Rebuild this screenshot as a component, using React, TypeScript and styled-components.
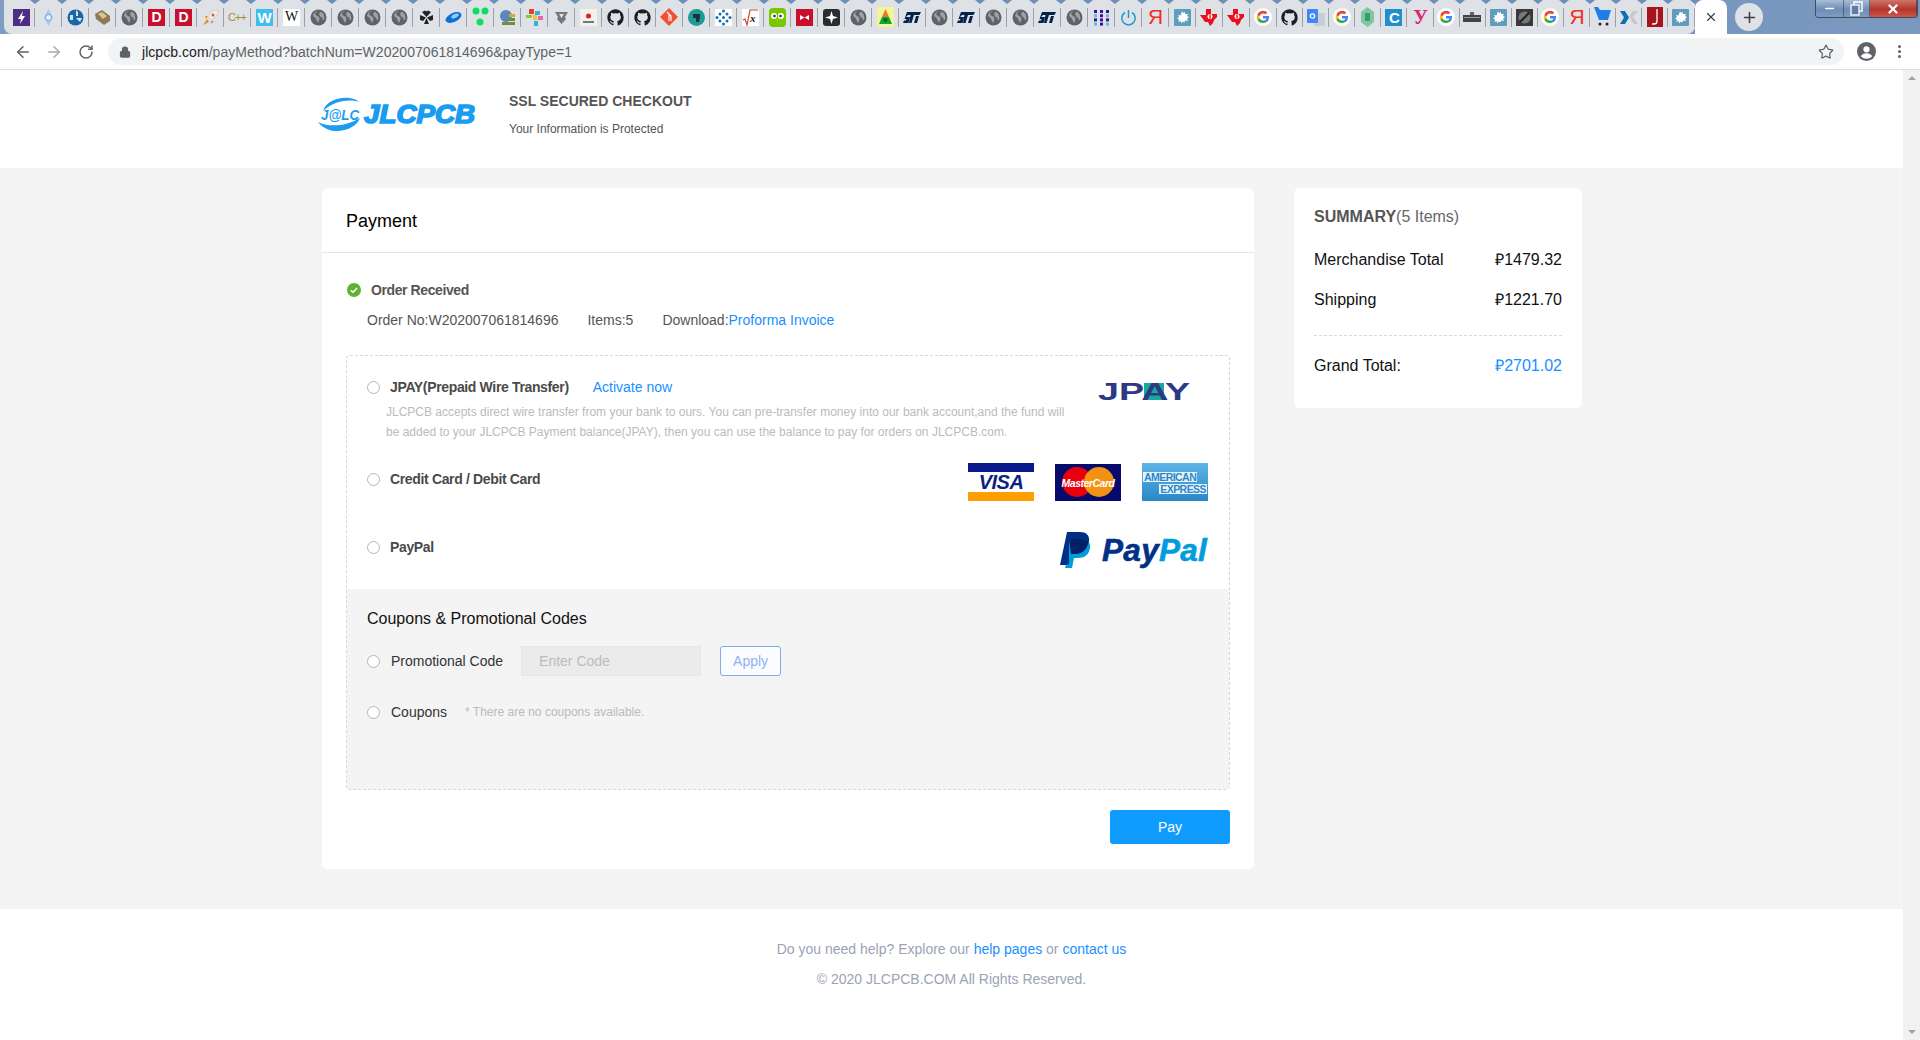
import React from "react";
import styled, { createGlobalStyle } from "styled-components";
import { ArrowLeft, ArrowRight, RotateCw, Lock, Star, X, Plus, Minus } from "lucide-react";

const GlobalStyle = createGlobalStyle`
  html, body { margin: 0; padding: 0; height: 100%; overflow: hidden; }
  body { font-family: "Liberation Sans", Arial, sans-serif; background: #fff; }
  * { box-sizing: border-box; }
`;

const FAVICONS = [
  "bolt", "pin", "bluegear", "stack", "globe", "d", "d", "rocket", "cpp", "wblue", "wiki",
  "globe", "globe", "globe", "globe", "clover", "disc", "dots", "tree", "mosaic", "shield", "stamp",
  "github", "github", "git", "teal", "diamond", "sqrt", "owl", "redbox", "star", "globe", "tri",
  "st", "globe", "st", "globe", "globe", "st", "globe", "grid", "power", "ya", "splash", "ti", "ti", "g",
  "github", "translate", "g", "hex", "c", "y", "g", "bank", "splash", "vault", "g", "ya", "cart", "x", "music", "splash",
];

function Favicon({ kind }: { kind: string }) {
  switch (kind) {
    case "bolt":
      return (
        <svg width="17" height="17" viewBox="0 0 17 17">
          <rect width="17" height="17" fill="#4b2e83" />
          <path d="M10 2 5 10h3l-1 5 5-8H9z" fill="#fff" />
        </svg>
      );
    case "pin":
      return (
        <svg width="17" height="17" viewBox="0 0 17 17">
          <path d="M8.5 0 13 8.5 8.5 17 4 8.5z" fill="#a9c8ef" />
          <circle cx="8.5" cy="8.5" r="3" fill="#eaf2fc" stroke="#6f9fdc" />
        </svg>
      );
    case "bluegear":
      return (
        <svg width="17" height="17" viewBox="0 0 17 17">
          <circle cx="8.5" cy="8.5" r="8" fill="#1668a8" />
          <path d="M9 1v6h2V3zM9 9h6l-2 4zM3 6h3v5H3z" fill="#dee1e6" />
        </svg>
      );
    case "stack":
      return (
        <svg width="17" height="17" viewBox="0 0 17 17">
          <path d="M1 5 8 1l8 6v5l-6 4-8-6z" fill="#8a7a58" />
          <path d="M4 5 8 3l5 4-4 3z" fill="#d8c690" />
        </svg>
      );
    case "globe":
      return (
        <svg width="17" height="17" viewBox="0 0 17 17">
          <circle cx="8.5" cy="8.5" r="8" fill="#5f6368" />
          <path d="M8 1.500 5 4l1 2.500 3 1.500 .5 2.500-1.500 3.500-1.500-3-1-2-2.500-2a7 7 0 0 1 5-5.500zM11 2.500l2.500 2.500 1 4.500-1.500 2-1-3-2-1-1-3z" fill="#b9bcc1" opacity=".7" />
        </svg>
      );
    case "d":
      return (
        <Square $bg="#c8102e" $fg="#fff" $size={14} $w={700}>D</Square>
      );
    case "rocket":
      return (
        <svg width="17" height="17" viewBox="0 0 17 17">
          <path d="M16 1c-5 0-8 3-10 7l3 3c4-2 7-5 7-10z" fill="#eee" stroke="#bbb" strokeWidth=".5" />
          <circle cx="11" cy="6" r="1.500" fill="#e05a3a" />
          <path d="M5 10 1 16l6-3zM3 7h3L4 10zM9 12v3l3-3z" fill="#e88a2a" />
        </svg>
      );
    case "cpp":
      return <Square $bg="transparent" $fg="#a88c2c" $size={11} $w={400}>C++</Square>;
    case "wblue":
      return <Square $bg="#3fbdee" $fg="#fff" $size={15} $w={700}>W</Square>;
    case "wiki":
      return <Square $bg="#fff" $fg="#111" $size={14} $w={400} $serif>W</Square>;
    case "clover":
      return (
        <svg width="17" height="17" viewBox="0 0 17 17">
          <path d="M8.500 8 4 3l3-1.500 1.500 1 1.500-1L13 3zM8 8.500 2 6 2 11l3 1zM9 8.500 15 6v5l-3 1zM8.500 9 6 15h5z" fill="#222" />
        </svg>
      );
    case "disc":
      return (
        <svg width="17" height="17" viewBox="0 0 17 17">
          <ellipse cx="8.500" cy="8.500" rx="8.500" ry="4.500" transform="rotate(-25 8.500 8.500)" fill="#0d6fd8" />
          <ellipse cx="10" cy="7" rx="4" ry="1.800" transform="rotate(-25 10 7)" fill="#8fd0ff" />
        </svg>
      );
    case "dots":
      return (
        <svg width="17" height="20" viewBox="0 0 17 20">
          <circle cx="4" cy="4" r="3.500" fill="#0be060" />
          <circle cx="13" cy="4" r="3.500" fill="#0be060" />
          <circle cx="8" cy="15" r="3.500" fill="#0be060" />
        </svg>
      );
    case "tree":
      return (
        <svg width="17" height="17" viewBox="0 0 17 17">
          <circle cx="7" cy="7" r="6" fill="#5a86b8" />
          <rect x="10" y="5" width="6" height="3" fill="#d6a92e" />
          <rect x="10" y="9" width="6" height="3" fill="#4f9a3c" />
          <rect x="3" y="13" width="13" height="3" fill="#7a8a3c" />
        </svg>
      );
    case "mosaic":
      return (
        <svg width="17" height="17" viewBox="0 0 17 17">
          <rect x="3" y="0" width="5" height="5" fill="#e8402a" />
          <rect x="9" y="2" width="5" height="4" fill="#35b0e0" />
          <rect x="0" y="6" width="6" height="3" fill="#8ac640" />
          <rect x="7" y="6" width="4" height="5" fill="#f2c230" />
          <rect x="12" y="7" width="5" height="4" fill="#e56aa0" />
          <rect x="8" y="12" width="4" height="5" fill="#35b0e0" />
        </svg>
      );
    case "shield":
      return (
        <svg width="17" height="17" viewBox="0 0 17 17">
          <path d="M2 3h13l-3 5 1 2-4.500 5L4 10l1-2z" fill="#777" />
          <path d="M6 5h5L8.500 9z" fill="#dee1e6" />
        </svg>
      );
    case "stamp":
      return (
        <svg width="17" height="17" viewBox="0 0 17 17">
          <rect width="17" height="17" fill="#f4f1ec" />
          <circle cx="8.500" cy="7" r="2.500" fill="#d9231f" />
          <rect x="3" y="12" width="11" height="2" fill="#777" />
        </svg>
      );
    case "github":
      return (
        <svg width="17" height="17" viewBox="0 0 24 24">
          <path
            fill="#1b1f23"
            d="M12 .5C5.650.5.500 5.650.500 12c0 5.100 3.300 9.400 7.900 10.900.6.100.8-.25.8-.55v-2c-3.200.7-3.900-1.400-3.900-1.400-.5-1.300-1.300-1.700-1.300-1.700-1-.7.100-.7.100-.7 1.200.1 1.800 1.200 1.800 1.200 1 1.800 2.700 1.300 3.400 1 .1-.8.400-1.300.7-1.600-2.600-.3-5.300-1.300-5.300-5.700 0-1.300.5-2.300 1.200-3.100-.1-.3-.5-1.500.1-3.100 0 0 1-.3 3.200 1.200a11 11 0 0 1 5.800 0c2.200-1.500 3.200-1.200 3.200-1.200.6 1.600.2 2.800.1 3.100.8.800 1.200 1.900 1.200 3.100 0 4.400-2.700 5.400-5.300 5.700.4.400.8 1.100.8 2.200v3.200c0 .3.200.7.800.6A11.500 11.500 0 0 0 23.500 12C23.500 5.650 18.350.5 12 .5z"
          />
        </svg>
      );
    case "git":
      return (
        <svg width="18" height="18" viewBox="0 0 18 18">
          <path d="M9 0 18 9l-9 9-9-9z" fill="#f05133" />
          <path d="M7 4l4 4v5M9 6v7" stroke="#fff" strokeWidth="1.200" fill="none" />
        </svg>
      );
    case "teal":
      return (
        <svg width="17" height="17" viewBox="0 0 17 17">
          <circle cx="8.500" cy="8.500" r="8.500" fill="#1f9a96" />
          <path d="M5 5h7v3l-1 5H8V9H5z" fill="#17323a" />
        </svg>
      );
    case "diamond":
      return (
        <svg width="17" height="17" viewBox="0 0 17 17">
          <rect width="17" height="17" fill="#fff" />
          {[[8.500, 2], [5, 5], [12, 5], [2, 8.500], [8.500, 8.500], [15, 8.500], [5, 12], [12, 12], [8.500, 15]].map(([x, y], i) => (
            <circle key={i} cx={x} cy={y} r="1.500" fill="#1670b8" />
          ))}
        </svg>
      );
    case "sqrt":
      return (
        <svg width="17" height="17" viewBox="0 0 17 17">
          <rect width="17" height="17" fill="#fff" />
          <path d="M1 11l2-1 2 6 3-15h8" stroke="#c8453a" strokeWidth="1.200" fill="none" />
          <SqrtX x="8" y="13">x</SqrtX>
        </svg>
      );
    case "owl":
      return (
        <svg width="17" height="19" viewBox="0 0 17 19">
          <rect width="17" height="19" rx="4" fill="#78c800" />
          <circle cx="5" cy="8" r="3" fill="#fff" />
          <circle cx="12" cy="8" r="3" fill="#fff" />
          <circle cx="5.500" cy="8" r="1.300" fill="#234" />
          <circle cx="11.500" cy="8" r="1.300" fill="#234" />
          <path d="M7 11h3l-1.500 2z" fill="#f5a800" />
        </svg>
      );
    case "redbox":
      return (
        <svg width="17" height="17" viewBox="0 0 17 17">
          <rect width="17" height="17" fill="#c8102e" />
          <path d="M4 6l4.500 2.500L13 6v5L8.500 8.500 4 11z" fill="#fff" />
        </svg>
      );
    case "star":
      return (
        <svg width="17" height="17" viewBox="0 0 17 17">
          <rect width="17" height="17" rx="3" fill="#2a2c30" />
          <path d="M8.500 2 10 7l5 1.500-5 1.500-1.500 5L7 10 2 8.500 7 7z" fill="#fff" />
        </svg>
      );
    case "tri":
      return (
        <svg width="17" height="20" viewBox="0 0 17 20">
          <rect width="17" height="20" fill="#f6f29a" />
          <path d="M8.500 2 12 10H5z" fill="#e87a1e" />
          <path d="M5 10h7l3 7H2z" fill="#0fa82e" />
          <circle cx="8.500" cy="13" r="2" fill="#063" />
        </svg>
      );
    case "st":
      return (
        <svg width="18" height="11" viewBox="0 0 18 11">
          <path d="M4 0h14l-1.500 3H11L8.500 11H6l1.500-8H5L3 5h4l-1.500 6H0l1-2.500h2L3.500 7H1.500z" fill="#03234b" />
          <path d="M13 4h3l-2 7h-3z" fill="#03234b" />
        </svg>
      );
    case "grid":
      return (
        <svg width="17" height="17" viewBox="0 0 17 17">
          {[0, 1, 2, 3].flatMap((r) =>
            [0, 1, 2].map((c) => (
              <rect key={`${r}-${c}`} x={1 + c * 6} y={1 + r * 4.200} width="3" height="3" fill={c === 1 ? "#41109a" : r % 2 ? "#4fc3e0" : "#41109a"} />
            ))
          )}
        </svg>
      );
    case "power":
      return (
        <svg width="17" height="17" viewBox="0 0 17 17" fill="none" stroke="#1d9ad6" strokeWidth="1.500">
          <path d="M8.500 1v8" />
          <path d="M5 3.500a6.700 6.700 0 1 0 7 0" />
        </svg>
      );
    case "ya":
      return <Square $bg="transparent" $fg="#f0301e" $size={21} $w={400}>Я</Square>;
    case "splash":
      return (
        <svg width="17" height="17" viewBox="0 0 17 17">
          <rect width="17" height="17" rx="1" fill="#5f9dbd" />
          <path d="M8 2l1 2 2-1v2l3 0-1 2 2 1-2 2 1 2-3-.500-.500 2-2-1-1 2-1-2.500-2 1 .500-2.500-2-1 2-1.500-1-2 2.500.500z" fill="#fff" />
        </svg>
      );
    case "ti":
      return (
        <svg width="18" height="17" viewBox="0 0 18 17">
          <path d="M6 0h5v5h6v3l-3 3-1 3-3 3-2-4H5L0 6h6z" fill="#e8101c" />
          <circle cx="10" cy="7.500" r="2.500" fill="#fff" />
          <rect x="9.300" y="5.500" width="1.400" height="4" fill="#e8101c" />
        </svg>
      );
    case "g":
      return (
        <svg width="18" height="18" viewBox="0 0 18 18">
          <circle cx="9" cy="9" r="9" fill="#fff" />
          <path d="M15 9.200c0-.4 0-.8-.1-1.200H9v2.400h3.400a3 3 0 0 1-1.300 1.900v1.500h2.100c1.100-1.100 1.800-2.700 1.800-4.600z" fill="#4285f4" />
          <path d="M9 15c1.700 0 3.100-.6 4.200-1.500l-2.100-1.600c-.6.400-1.300.7-2.100.7-1.600 0-3-1.100-3.500-2.500H3.400v1.600A6 6 0 0 0 9 15z" fill="#34a853" />
          <path d="M5.500 10.600a3.600 3.600 0 0 1 0-2.300V6.700H3.400a6 6 0 0 0 0 5.500z" fill="#fbbc05" />
          <path d="M9 5.400c.9 0 1.700.3 2.400.9l1.800-1.800A6 6 0 0 0 3.400 6.700l2.100 1.600C6 6.500 7.400 5.400 9 5.400z" fill="#ea4335" />
        </svg>
      );
    case "translate":
      return (
        <svg width="18" height="17" viewBox="0 0 18 17">
          <rect x="7" y="4" width="11" height="13" fill="#c9ccd1" />
          <rect width="11" height="14" rx="1" fill="#4285f4" />
          <circle cx="5.500" cy="7" r="2.200" fill="none" stroke="#fff" strokeWidth="1.200" />
        </svg>
      );
    case "hex":
      return (
        <svg width="15" height="20" viewBox="0 0 15 20">
          <path d="M7.500 0 14 5v10l-6.500 5L1 15V5z" fill="#7dc8a0" />
          <rect x="5" y="6" width="5" height="8" fill="#3c9a6c" />
        </svg>
      );
    case "c":
      return <Square $bg="#1f8fcf" $fg="#fff" $size={15} $w={700}>C</Square>;
    case "y":
      return <Square $bg="transparent" $fg="#e0246a" $size={20} $w={700} $serif>У</Square>;
    case "bank":
      return (
        <svg width="18" height="10" viewBox="0 0 18 10">
          <rect y="3" width="18" height="7" fill="#444" />
          <rect x="7" width="4" height="3" fill="#666" />
          <rect x="1" y="5" width="16" height="1" fill="#999" />
        </svg>
      );
    case "vault":
      return (
        <svg width="17" height="17" viewBox="0 0 17 17">
          <rect width="17" height="17" fill="#3a3a3a" />
          <circle cx="8.500" cy="8.500" r="6" fill="#777" />
          <path d="M4 13 13 4" stroke="#222" strokeWidth="2" />
        </svg>
      );
    case "cart":
      return (
        <svg width="17" height="20" viewBox="0 0 17 20">
          <path d="M0 0h4l2 3h11l-3 10H5z" fill="#1e7ee8" />
          <circle cx="6" cy="17" r="1.500" fill="#222" />
          <circle cx="13" cy="17" r="1.500" fill="#222" />
        </svg>
      );
    case "x":
      return (
        <svg width="18" height="13" viewBox="0 0 18 13">
          <path d="M0 0h5l4 6.500L5 13H0l4-6.500z" fill="#0f6fb0" />
          <path d="M18 0h-5L9.500 5 11 8l7-8zM11 9l3 4h4l-5-7z" fill="#c4c7cc" />
        </svg>
      );
    case "music":
      return (
        <svg width="16" height="20" viewBox="0 0 16 20">
          <rect width="16" height="20" fill="#a8141c" />
          <path d="M10 2v12a3 3 0 0 1-3 3H5" stroke="#fff" strokeWidth="1.300" fill="none" />
        </svg>
      );
    default:
      return null;
  }
}

function JlcLogo() {
  return (
    <svg width="160" height="38" viewBox="0 0 160 38">
      <path d="M6 15C9 6 20 1 32 2c5 .4 8 2 10 4-8-3-24-2-36 9z" fill="#1a9cf0" />
      <path d="M43 22c-3 8-14 14-26 13C9 34 3 29 1 26c9 5 28 5 42-4z" fill="#1a9cf0" />
      <LogoBadge x="4" y="24" textLength="38" lengthAdjust="spacingAndGlyphs">J@LC</LogoBadge>
      <LogoWord x="47" y="27" textLength="111" lengthAdjust="spacingAndGlyphs">JLCPCB</LogoWord>
    </svg>
  );
}

function JpayLogo() {
  return (
    <svg width="92" height="27" viewBox="0 0 92 27">
      <rect x="46" y="4" width="20" height="17" fill="#17a8a0" />
      <JpayWord x="0" y="21" textLength="92" lengthAdjust="spacingAndGlyphs">JPAY</JpayWord>
    </svg>
  );
}

function PaypalLogo() {
  return (
    <PaypalWrap>
      <svg width="32" height="36" viewBox="0 0 32 36">
        <path d="M8 0h13c6 0 10 3 9 10-1 8-6 12-13 12h-5l-2 11H1z" fill="#002f86" />
        <path d="M10 7h13c5 0 9 3 8 9-1 7-6 10-12 10h-4l-2 10H6l1-3 3-1z" fill="#009cde" />
        <path d="M10 7h13c3 0 5 1 6.600 2.500C28.500 17 23.500 22 17 22h-5z" fill="#012169" />
      </svg>
      <PaypalText>Pay<PaypalLight>Pal</PaypalLight></PaypalText>
    </PaypalWrap>
  );
}

function RestoreIcon() {
  return (
    <svg width="13" height="15" viewBox="0 0 13 15" fill="none" stroke="#fff" strokeWidth="1.500">
      <rect x="4" y="1" width="8" height="9" />
      <rect x="1" y="4" width="8" height="10" fill="#5d7ea6" stroke="#e8eef6" />
    </svg>
  );
}

export default function App() {
  return (
    <>
      <GlobalStyle />
      <Screen>
        <TabStrip>
          <Tabs>
            {FAVICONS.map((kind, i) => (
              <Tab key={i} $w={i < 47 ? 27 : 26.1}>
                <Favicon kind={kind} />
              </Tab>
            ))}
          </Tabs>
          <ActiveTab>
            <X size={14} strokeWidth={2} />
          </ActiveTab>
          <NewTab>
            <Plus size={17} strokeWidth={2.2} />
          </NewTab>
          <WindowControls>
            <WinButton $w={28}>
              <Minus size={13} strokeWidth={3} color="#fff" />
            </WinButton>
            <WinButton $w={26}>
              <RestoreIcon />
            </WinButton>
            <WinButton $w={47} $close>
              <X size={14} strokeWidth={4} color="#fff" />
            </WinButton>
          </WindowControls>
        </TabStrip>

        <Toolbar>
          <NavIcon $left={14}>
            <ArrowLeft size={18} strokeWidth={2} color="#5f6368" />
          </NavIcon>
          <NavIcon $left={13}>
            <ArrowRight size={18} strokeWidth={2} color="#a8abaf" />
          </NavIcon>
          <NavIcon $left={15}>
            <RotateCw size={16} strokeWidth={2.2} color="#5f6368" />
          </NavIcon>
          <UrlBar>
            <Lock size={12} strokeWidth={2.5} color="#5f6368" fill="#5f6368" />
            <UrlText>
              <UrlHost>jlcpcb.com</UrlHost>/payMethod?batchNum=W202007061814696&amp;payType=1
            </UrlText>
            <UrlStar>
              <Star size={16} strokeWidth={1.8} color="#5f6368" />
            </UrlStar>
          </UrlBar>
          <Avatar>
            <svg width="19" height="19" viewBox="0 0 19 19">
              <circle cx="9.500" cy="9.500" r="9.500" fill="#5f6368" />
              <circle cx="9.500" cy="7.300" r="3.100" fill="#fff" />
              <path d="M3.800 14.200c1-2 3.200-3 5.700-3s4.700 1 5.700 3a7.500 7.500 0 0 1-11.400 0z" fill="#fff" />
            </svg>
          </Avatar>
          <MenuDots>
            <span />
            <span />
            <span />
          </MenuDots>
        </Toolbar>

        <Viewport>
          <Page>
            <TopHeader>
              <LogoBox>
                <JlcLogo />
              </LogoBox>
              <SecureBlock>
                <SecureTitle>SSL SECURED CHECKOUT</SecureTitle>
                <SecureSub>Your Information is Protected</SecureSub>
              </SecureBlock>
            </TopHeader>

            <Content>
              <PaymentCard>
                <CardHead>Payment</CardHead>
                <CardBody>
                  <StatusRow>
                    <svg width="14" height="14" viewBox="0 0 14 14">
                      <circle cx="7" cy="7" r="7" fill="#5bb531" />
                      <path d="M3.800 7.200 6 9.300l4.200-4.300" stroke="#fff" strokeWidth="1.500" fill="none" />
                    </svg>
                    <StatusText>Order Received</StatusText>
                  </StatusRow>
                  <OrderMeta>
                    <span>Order No:W202007061814696</span>
                    <span>Items:5</span>
                    <span>
                      Download:<BlueLink>Proforma Invoice</BlueLink>
                    </span>
                  </OrderMeta>

                  <MethodsBox>
                    <MethodRow $h={97}>
                      <MethodLeft $top={21}>
                        <MethodLine>
                          <Radio />
                          <MethodName>JPAY(Prepaid Wire Transfer)</MethodName>
                          <ActivateLink>Activate now</ActivateLink>
                        </MethodLine>
                        <MethodDesc>
                          JLCPCB accepts direct wire transfer from your bank to ours. You can pre-transfer money into our bank account,and the fund will
                          be added to your JLCPCB Payment balance(JPAY), then you can use the balance to pay for orders on JLCPCB.com.
                        </MethodDesc>
                      </MethodLeft>
                      <MethodLogos $top={23} $right={19}>
                        <JpayLogo />
                      </MethodLogos>
                    </MethodRow>

                    <MethodRow $h={68}>
                      <MethodLeft $top={16}>
                        <MethodLine>
                          <Radio />
                          <MethodName>Credit Card / Debit Card</MethodName>
                        </MethodLine>
                      </MethodLeft>
                      <MethodLogos $top={10} $right={1}>
                        <VisaCard>
                          <VisaWord>VISA</VisaWord>
                        </VisaCard>
                        <MasterCard>
                          <McCircle $c="#f40009" $side="left" />
                          <McCircle $c="#ff9a0e" $side="right" />
                          <McWord>MasterCard</McWord>
                        </MasterCard>
                        <AmexCard>
                          <AmexLine>AMERICAN</AmexLine>
                          <AmexLine $right>EXPRESS</AmexLine>
                        </AmexCard>
                      </MethodLogos>
                    </MethodRow>

                    <MethodRow $h={68}>
                      <MethodLeft $top={16}>
                        <MethodLine>
                          <Radio />
                          <MethodName>PayPal</MethodName>
                        </MethodLine>
                      </MethodLeft>
                      <MethodLogos $top={11} $right={0}>
                        <PaypalLogo />
                      </MethodLogos>
                    </MethodRow>

                    <PromoPanel>
                      <PromoTitle>Coupons &amp; Promotional Codes</PromoTitle>
                      <PromoRow>
                        <Radio />
                        <PromoLabel>Promotional Code</PromoLabel>
                        <CodeInput placeholder="Enter Code" disabled />
                        <ApplyButton>Apply</ApplyButton>
                      </PromoRow>
                      <CouponRow>
                        <Radio />
                        <PromoLabel>Coupons</PromoLabel>
                        <CouponNote>* There are no coupons available.</CouponNote>
                      </CouponRow>
                    </PromoPanel>
                  </MethodsBox>

                  <PayRow>
                    <PayButton>Pay</PayButton>
                  </PayRow>
                </CardBody>
              </PaymentCard>

              <SummaryCard>
                <SummaryTitle>
                  <strong>SUMMARY</strong>(5 Items)
                </SummaryTitle>
                <SummaryRow $mt={23}>
                  <span>Merchandise Total</span>
                  <span>₽1479.32</span>
                </SummaryRow>
                <SummaryRow $mt={20}>
                  <span>Shipping</span>
                  <span>₽1221.70</span>
                </SummaryRow>
                <SummaryDivider />
                <SummaryRow $mt={20}>
                  <span>Grand Total:</span>
                  <GrandValue>₽2701.02</GrandValue>
                </SummaryRow>
              </SummaryCard>
            </Content>

            <Footer>
              <FooterLine>
                Do you need help? Explore our <BlueLink>help pages</BlueLink> or <BlueLink>contact us</BlueLink>
              </FooterLine>
              <FooterLine>© 2020 JLCPCB.COM All Rights Reserved.</FooterLine>
            </Footer>
          </Page>
          <ScrollTrack>
            <ScrollArrow $up />
            <ScrollArrow />
          </ScrollTrack>
        </Viewport>
      </Screen>
    </>
  );
}

const Screen = styled.div`
  width: 1920px;
  height: 1040px;
  display: flex;
  flex-direction: column;
  overflow: hidden;
`;

const TabStrip = styled.div`
  height: 34px;
  display: flex;
  flex-shrink: 0;
  background: linear-gradient(90deg, #7f9cc2, #6f90ba 60%, #7b99bf);
`;
const Tabs = styled.div`
  width: 1691px;
  margin-left: 4px;
  padding-left: 4px;
  display: flex;
  flex-shrink: 0;
  background: #dee1e6;
  border-radius: 0 0 8px 8px;
`;
const Tab = styled.div<{ $w: number }>`
  position: relative;
  width: ${(p) => p.$w}px;
  flex-shrink: 0;
  display: flex;
  align-items: center;
  justify-content: center;
  padding-right: 1px;
  &::before {
    content: "";
    position: absolute;
    right: 0;
    top: 8px;
    height: 19px;
    width: 1px;
    background: #9aa0a6;
  }
  &::after {
    content: "";
    position: absolute;
    right: -5px;
    top: 0;
    border-left: 5.5px solid transparent;
    border-right: 5.5px solid transparent;
    border-top: 4px solid #6c8eb8;
  }
`;
const Square = styled.div<{ $bg: string; $fg: string; $size: number; $w: number; $serif?: boolean }>`
  width: 17px;
  height: 17px;
  display: flex;
  align-items: center;
  justify-content: center;
  background: ${(p) => p.$bg};
  color: ${(p) => p.$fg};
  font-size: ${(p) => p.$size}px;
  font-weight: ${(p) => p.$w};
  font-family: ${(p) => (p.$serif ? '"Liberation Serif", serif' : '"Liberation Sans", sans-serif')};
  white-space: nowrap;
  letter-spacing: -1px;
`;
const SqrtX = styled.text`
  font-family: "Liberation Serif", serif;
  font-size: 11px;
  font-style: italic;
  font-weight: 700;
  fill: #222;
`;
const ActiveTab = styled.div`
  width: 32px;
  flex-shrink: 0;
  background: #fff;
  border-radius: 8px 8px 0 0;
  display: flex;
  align-items: center;
  justify-content: center;
  color: #3c4043;
`;
const NewTab = styled.div`
  width: 28px;
  height: 28px;
  flex-shrink: 0;
  margin: 3px 0 0 8px;
  border-radius: 50%;
  background: #dee1e6;
  display: flex;
  align-items: center;
  justify-content: center;
  color: #3c4043;
`;
const WindowControls = styled.div`
  margin-left: 52px;
  width: 103px;
  height: 18px;
  flex-shrink: 0;
  display: flex;
  border: 1px solid #3f4e60;
  border-top: 0;
  border-radius: 0 0 4px 4px;
  overflow: hidden;
`;
const WinButton = styled.div<{ $w: number; $close?: boolean }>`
  width: ${(p) => p.$w}px;
  display: flex;
  align-items: center;
  justify-content: center;
  border-right: 1px solid rgba(40, 50, 70, 0.5);
  background: ${(p) =>
    p.$close
      ? "linear-gradient(#c9766c, #b8352a 55%, #c9574a)"
      : "linear-gradient(#a9bdd6, #6f8db4 55%, #7f9cc2)"};
`;

const Toolbar = styled.div`
  height: 36px;
  flex-shrink: 0;
  display: flex;
  align-items: center;
  background: #fff;
  border-bottom: 1px solid #dadce0;
`;
const NavIcon = styled.div<{ $left: number }>`
  margin-left: ${(p) => p.$left}px;
  display: flex;
`;
const UrlBar = styled.div`
  margin-left: 14px;
  width: 1736px;
  height: 27px;
  border-radius: 14px;
  background: #f1f3f4;
  display: flex;
  align-items: center;
  padding: 0 10px 0 11px;
`;
const UrlText = styled.div`
  margin-left: 11px;
  font-size: 14px;
  letter-spacing: 0.05px;
  color: #5f6368;
  white-space: nowrap;
`;
const UrlHost = styled.span`
  color: #202124;
`;
const UrlStar = styled.div`
  margin-left: auto;
  display: flex;
`;
const Avatar = styled.div`
  margin-left: 13px;
  display: flex;
`;
const MenuDots = styled.div`
  margin-left: 22px;
  display: flex;
  flex-direction: column;
  gap: 2px;
  span {
    width: 3px;
    height: 3px;
    border-radius: 50%;
    background: #5f6368;
  }
`;

const Viewport = styled.div`
  flex: 1;
  display: flex;
  min-height: 0;
`;
const Page = styled.div`
  flex: 1;
  display: flex;
  flex-direction: column;
  min-width: 0;
`;
const ScrollTrack = styled.div`
  width: 17px;
  background: #f1f1f1;
  display: flex;
  flex-direction: column;
  justify-content: space-between;
  align-items: center;
  padding: 6px 0;
`;
const ScrollArrow = styled.div<{ $up?: boolean }>`
  width: 0;
  height: 0;
  border-left: 4px solid transparent;
  border-right: 4px solid transparent;
  ${(p) => (p.$up ? "border-bottom: 4px solid #a3a3a3;" : "border-top: 4px solid #a3a3a3;")}
`;

const TopHeader = styled.header`
  height: 98px;
  flex-shrink: 0;
  background: #fff;
  display: flex;
  padding: 21px 0 0 317px;
`;
const LogoBox = styled.div`
  width: 192px;
  margin-top: 5px;
`;
const LogoBadge = styled.text`
  font-family: "Liberation Sans", sans-serif;
  font-size: 14px;
  font-style: italic;
  font-weight: 700;
  fill: #1a9cf0;
`;
const LogoWord = styled.text`
  font-family: "Liberation Sans", sans-serif;
  font-size: 26px;
  font-style: italic;
  font-weight: 700;
  fill: #1a9cf0;
  stroke: #1a9cf0;
  stroke-width: 1.6px;
`;
const SecureBlock = styled.div`
  display: flex;
  flex-direction: column;
  gap: 8px;
`;
const SecureTitle = styled.div`
  font-size: 14px;
  line-height: 20px;
  font-weight: 700;
  color: #555;
`;
const SecureSub = styled.div`
  font-size: 12px;
  line-height: 20px;
  color: #555;
`;

const Content = styled.main`
  flex: 1;
  background: #f4f4f4;
  display: flex;
  align-items: flex-start;
  gap: 40px;
  padding: 20px 0 40px 322px;
`;
const PaymentCard = styled.section`
  width: 932px;
  background: #fff;
  border-radius: 6px;
`;
const CardHead = styled.h2`
  margin: 0;
  height: 65px;
  padding: 2px 0 0 24px;
  display: flex;
  align-items: center;
  border-bottom: 1px solid #e4e4e4;
  font-size: 18px;
  font-weight: 400;
  color: #000;
`;
const CardBody = styled.div`
  padding: 27px 24px 25px;
`;
const StatusRow = styled.div`
  display: flex;
  align-items: center;
  height: 20px;
  padding-left: 1px;
`;
const StatusText = styled.span`
  margin-left: 10px;
  font-size: 14px;
  font-weight: 700;
  color: #555;
  letter-spacing: -0.4px;
`;
const OrderMeta = styled.div`
  margin-top: 10px;
  padding-left: 21px;
  display: flex;
  gap: 29px;
  font-size: 14px;
  line-height: 20px;
  color: #555;
`;
const BlueLink = styled.span`
  color: #1890ff;
`;
const MethodsBox = styled.div`
  margin-top: 25px;
  border: 1px dashed #d6d6d6;
  border-radius: 4px;
  height: 435px;
  display: flex;
  flex-direction: column;
`;
const MethodRow = styled.div<{ $h: number }>`
  height: ${(p) => p.$h}px;
  padding: 0 20px;
  display: flex;
  justify-content: space-between;
  align-items: flex-start;
  flex-shrink: 0;
`;
const MethodLeft = styled.div<{ $top: number }>`
  padding-top: ${(p) => p.$top}px;
`;
const MethodLine = styled.div`
  display: flex;
  align-items: center;
  height: 20px;
`;
const Radio = styled.span`
  width: 13px;
  height: 13px;
  flex-shrink: 0;
  border: 1px solid #b5b5b5;
  border-radius: 50%;
  background: #fff;
`;
const MethodName = styled.span`
  margin-left: 10px;
  font-size: 14px;
  font-weight: 700;
  color: #4a4a4a;
  letter-spacing: -0.35px;
`;
const ActivateLink = styled.span`
  margin-left: 24px;
  font-size: 14px;
  color: #1890ff;
`;
const MethodDesc = styled.p`
  margin: 5px 0 0 19px;
  width: 690px;
  font-size: 12px;
  line-height: 20px;
  color: #bbb;
`;
const MethodLogos = styled.div<{ $top: number; $right: number }>`
  margin-top: ${(p) => p.$top}px;
  margin-right: ${(p) => p.$right}px;
  display: flex;
  gap: 21px;
`;
const JpayWord = styled.text`
  font-family: "Liberation Sans", sans-serif;
  font-size: 23px;
  font-weight: 700;
  fill: #2b3a82;
`;
const VisaCard = styled.div`
  width: 66px;
  height: 38px;
  display: flex;
  align-items: center;
  justify-content: center;
  background: #fff;
  border-top: 9px solid #0a1a8c;
  border-bottom: 9px solid #ff9e00;
`;
const VisaWord = styled.span`
  font-size: 20px;
  font-weight: 700;
  font-style: italic;
  color: #0d1f80;
  letter-spacing: -0.5px;
`;
const MasterCard = styled.div`
  position: relative;
  width: 66px;
  height: 37px;
  margin-top: 1px;
  background: #060a6a;
`;
const McCircle = styled.span<{ $c: string; $side: "left" | "right" }>`
  position: absolute;
  top: 3px;
  ${(p) => p.$side}: 7px;
  width: 30px;
  height: 30px;
  border-radius: 50%;
  background: ${(p) => p.$c};
  opacity: 0.95;
`;
const McWord = styled.span`
  position: absolute;
  left: 0;
  right: 0;
  top: 13px;
  text-align: center;
  font-size: 10.5px;
  line-height: 12px;
  font-weight: 700;
  font-style: italic;
  color: #fff;
  letter-spacing: -0.5px;
`;
const AmexCard = styled.div`
  width: 66px;
  height: 38px;
  padding: 9px 1px 0;
  background: linear-gradient(#5eb4e6, #2a88c8);
  display: flex;
  flex-direction: column;
  gap: 2px;
`;
const AmexLine = styled.span<{ $right?: boolean }>`
  align-self: ${(p) => (p.$right ? "flex-end" : "flex-start")};
  padding: 0 1px;
  background: #e6f3fb;
  font-size: 10.5px;
  line-height: 10px;
  font-weight: 700;
  color: #2a88c8;
  letter-spacing: -0.55px;
`;
const PaypalWrap = styled.div`
  width: 150px;
  height: 36px;
  display: flex;
  align-items: center;
  gap: 11px;
`;
const PaypalText = styled.span`
  font-size: 31.5px;
  line-height: 36px;
  font-weight: 700;
  font-style: italic;
  color: #003087;
  letter-spacing: 0.3px;
  -webkit-text-stroke: 0.6px currentColor;
`;
const PaypalLight = styled.span`
  color: #009cde;
`;
const PromoPanel = styled.div`
  flex: 1;
  background: #f4f4f4;
  padding: 20px 20px 0;
`;
const PromoTitle = styled.h3`
  margin: 0;
  font-size: 16px;
  line-height: 20px;
  font-weight: 400;
  color: #111;
`;
const PromoRow = styled.div`
  margin-top: 17px;
  display: flex;
  align-items: center;
  height: 30px;
`;
const PromoLabel = styled.span`
  margin-left: 11px;
  font-size: 14px;
  color: #333;
`;
const CodeInput = styled.input`
  margin-left: 18px;
  width: 180px;
  height: 30px;
  padding: 0 17px;
  background: #ebebeb;
  border: 1px solid #e6e6e6;
  font-family: inherit;
  font-size: 14px;
  &::placeholder {
    color: #bbb;
    opacity: 1;
  }
`;
const ApplyButton = styled.button`
  margin-left: 19px;
  width: 61px;
  height: 30px;
  padding: 0;
  background: #fafcff;
  border: 1px solid #7faaf0;
  border-radius: 3px;
  font-family: inherit;
  font-size: 14px;
  color: #8fb3ee;
`;
const CouponRow = styled.div`
  margin-top: 26px;
  display: flex;
  align-items: center;
  height: 20px;
`;
const CouponNote = styled.span`
  margin-left: 18px;
  font-size: 12px;
  color: #bbb;
`;
const PayRow = styled.div`
  margin-top: 20px;
  display: flex;
  justify-content: flex-end;
`;
const PayButton = styled.button`
  width: 120px;
  height: 34px;
  padding: 0;
  border: 0;
  border-radius: 3px;
  background: #109bff;
  color: #fff;
  font-family: inherit;
  font-size: 14px;
`;

const SummaryCard = styled.aside`
  width: 288px;
  height: 220px;
  padding: 19px 20px 0;
  background: #fff;
  border-radius: 6px;
`;
const SummaryTitle = styled.div`
  font-size: 16px;
  line-height: 20px;
  color: #666;
  strong {
    color: #555;
  }
`;
const SummaryRow = styled.div<{ $mt: number }>`
  margin-top: ${(p) => p.$mt}px;
  display: flex;
  justify-content: space-between;
  font-size: 16px;
  line-height: 20px;
  color: #111;
`;
const SummaryDivider = styled.div`
  margin-top: 25px;
  border-top: 1px dashed #d8d8d8;
`;
const GrandValue = styled.span`
  color: #1890ff;
`;

const Footer = styled.footer`
  height: 131px;
  flex-shrink: 0;
  background: #fff;
  padding-top: 30px;
  display: flex;
  flex-direction: column;
  gap: 10px;
  align-items: center;
`;
const FooterLine = styled.div`
  font-size: 14px;
  line-height: 20px;
  color: #9ba3b5;
`;
